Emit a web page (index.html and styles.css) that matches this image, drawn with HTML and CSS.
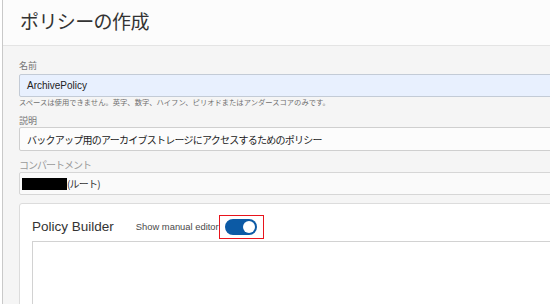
FILE: index.html
```html
<!DOCTYPE html>
<html>
<head>
  <meta charset="utf-8">
  <title>ポリシーの作成</title>
  <link rel="stylesheet" href="styles.css">
</head>
<body>
<div class="page">
  <!-- Header -->
  <div class="page-header">
    <h1 class="page-title">ポリシーの作成</h1>
  </div>

  <!-- Form -->
  <form class="policy-form">
    <label class="field-label" for="policy-name">名前</label>
    <div class="text-input autofilled" id="policy-name">ArchivePolicy</div>
    <div class="help-text">スペースは使用できません。英字、数字、ハイフン、ピリオドまたはアンダースコアのみです。</div>

    <label class="field-label spaced" for="policy-desc">説明</label>
    <div class="text-input tall" id="policy-desc">バックアップ用のアーカイブストレージにアクセスするためのポリシー</div>

    <label class="field-label spaced muted" for="compartment">コンパートメント</label>
    <div class="text-input select-input" id="compartment">
      <span class="redacted"></span><span class="compartment-root">(ルート)</span>
    </div>

    <!-- Policy Builder card -->
    <div class="builder-card">
      <div class="builder-head">
        <h2 class="builder-title">Policy Builder</h2>
        <span class="manual-label">Show manual editor</span>
        <span class="highlight-box">
          <span class="toggle on"><span class="toggle-knob"></span></span>
        </span>
      </div>
      <div class="builder-editor"></div>
    </div>
  </form>
</div>
</body>
</html>
```

FILE: styles.css
```css
/* Base */
html,
body {
  height: 100%;
}

body {
  margin: 0;
  padding-left: 2px;
  box-sizing: border-box;
  background-color: #ffffff;
  font-family: "Liberation Sans", "Noto Sans CJK JP", sans-serif;
  overflow: hidden;
}

/* the screenshot is a crop: fields run on past the right and bottom edges */
.page {
  height: 100%;
  overflow: hidden;
  background-color: #f5f5f5;
  border-left: 1px solid #c9c9c9;
}

/* Header */
.page-header {
  height: 45px;
  background-color: #fcfcfc;
  border-bottom: 1px solid #e4e4e4;
  padding-left: 17px;
}

.page-title {
  margin: 0;
  font-family: "Noto Sans CJK JP", sans-serif;
  font-size: 19px;
  font-weight: normal;
  line-height: 42px;
  letter-spacing: -0.6px;
  color: #333333;
}

/* Form fields */
.policy-form {
  width: 800px;
  padding: 14px 0 0 16px;
}

.field-label {
  display: block;
  font-family: "Noto Sans CJK JP", sans-serif;
  font-size: 9px;
  line-height: 12px;
  color: #757575;
  margin-bottom: 2px;
}

.field-label.spaced {
  margin-top: 8px;
  margin-bottom: 0;
}

.field-label.muted {
  font-size: 10px;
  letter-spacing: -1px;
  color: #9a9a9a;
  margin-bottom: 1px;
}

.text-input {
  box-sizing: border-box;
  height: 23px;
  padding-left: 7px;
  display: flex;
  align-items: center;
  font-size: 10px;
  color: #222222;
  background-color: #fcfcfc;
  border: 1px solid #cfcfcf;
  border-radius: 2px;
}

.text-input.autofilled {
  background-color: #e8f0fe;
  border-color: #c3cbd6;
}

.text-input.tall {
  height: 24px;
  font-family: "Noto Sans CJK JP", sans-serif;
  letter-spacing: -0.75px;
}

.select-input {
  padding-left: 2px;
  background-color: #fafafa;
  border-color: #d6d6d6;
}

.help-text {
  font-family: "Noto Sans CJK JP", sans-serif;
  font-size: 7.3px;
  line-height: 10px;
  color: #6f6f6f;
}

.redacted {
  display: inline-block;
  width: 45px;
  height: 12px;
  background-color: #000000;
}

.compartment-root {
  font-family: "Noto Sans CJK JP", sans-serif;
  font-size: 10px;
  letter-spacing: -0.8px;
  color: #333333;
}

/* Policy Builder */
.builder-card {
  margin-top: 8px;
  padding: 7px 0 0 12px;
  height: 120px;
  background-color: #ffffff;
  border: 1px solid #dcdcdc;
  border-radius: 3px;
}

.builder-head {
  display: flex;
  align-items: center;
  height: 30px;
}

.builder-title {
  margin: 0;
  font-size: 13.5px;
  font-weight: normal;
  color: #333333;
}

.manual-label {
  margin-left: 22px;
  font-size: 9.4px;
  color: #4a4a4a;
}

.highlight-box {
  display: flex;
  margin-top: 2px;
  padding: 3px 6px 3px 5px;
  border: 1px solid #e8141c;
}

.toggle {
  position: relative;
  width: 32px;
  height: 16px;
  border-radius: 8px;
  background-color: #0c5aa5;
}

.toggle-knob {
  position: absolute;
  top: 2px;
  right: 2px;
  width: 12px;
  height: 12px;
  border-radius: 50%;
  background-color: #ffffff;
}

.builder-editor {
  height: 80px;
  background-color: #ffffff;
  border: 1px solid #d2d2d2;
}
```
